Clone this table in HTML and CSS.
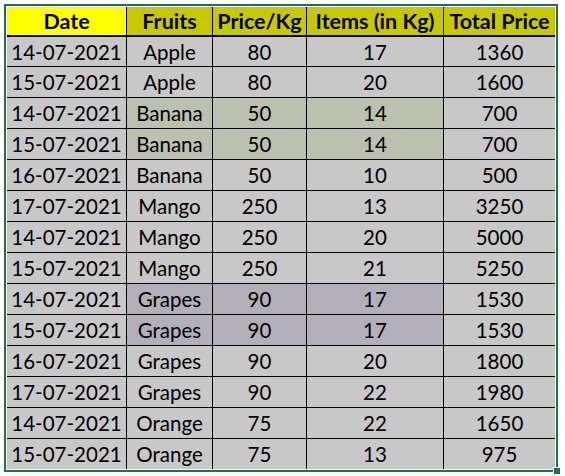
FILE: index.html
```html
<!DOCTYPE html>
<html>
<head>
<meta charset="utf-8">
<link rel="stylesheet" href="styles.css">
</head>
<body>
<div class="sheet">
  <table class="grid">
    <colgroup>
      <col class="c-date"><col class="c-fruit"><col class="c-price"><col class="c-items"><col class="c-total">
    </colgroup>
    <thead>
      <tr>
        <th class="hd-date">Date</th>
        <th>Fruits</th>
        <th>Price/Kg</th>
        <th>Items (in Kg)</th>
        <th>Total Price</th>
      </tr>
    </thead>
    <tbody>
      <tr><td>14-07-2021</td><td>Apple</td><td>80</td><td>17</td><td>1360</td></tr>
      <tr><td>15-07-2021</td><td>Apple</td><td>80</td><td>20</td><td>1600</td></tr>
      <tr><td>14-07-2021</td><td class="hl-green">Banana</td><td class="hl-green">50</td><td class="hl-green">14</td><td>700</td></tr>
      <tr><td>15-07-2021</td><td class="hl-green">Banana</td><td class="hl-green">50</td><td class="hl-green">14</td><td>700</td></tr>
      <tr><td>16-07-2021</td><td>Banana</td><td>50</td><td>10</td><td>500</td></tr>
      <tr><td>17-07-2021</td><td>Mango</td><td>250</td><td>13</td><td>3250</td></tr>
      <tr><td>14-07-2021</td><td>Mango</td><td>250</td><td>20</td><td>5000</td></tr>
      <tr><td>15-07-2021</td><td>Mango</td><td>250</td><td>21</td><td>5250</td></tr>
      <tr><td>14-07-2021</td><td class="hl-purple">Grapes</td><td class="hl-purple">90</td><td class="hl-purple">17</td><td>1530</td></tr>
      <tr><td>15-07-2021</td><td class="hl-purple">Grapes</td><td class="hl-purple">90</td><td class="hl-purple">17</td><td>1530</td></tr>
      <tr><td>16-07-2021</td><td>Grapes</td><td>90</td><td>20</td><td>1800</td></tr>
      <tr><td>17-07-2021</td><td>Grapes</td><td>90</td><td>22</td><td>1980</td></tr>
      <tr><td>14-07-2021</td><td>Orange</td><td>75</td><td>22</td><td>1650</td></tr>
      <tr><td>15-07-2021</td><td>Orange</td><td>75</td><td>13</td><td>975</td></tr>
    </tbody>
  </table>
  <span class="fill-handle"></span>
</div>
</body>
</html>
```

FILE: styles.css
```css
html, body {
  margin: 0;
  padding: 0;
  background: #ffffff;
}

body {
  padding: 4px;
  font-family: Lato, "Open Sans", "Liberation Sans", sans-serif;
}

.sheet {
  position: relative;
  display: inline-block;
  border: 2px solid #217346;
  padding: 1px;
  background: #ffffff;
}

.grid {
  border-collapse: separate;
  border-spacing: 0;
  table-layout: fixed;
  width: 548px;
  background: #c8c8c8;
}

.c-date { width: 120px; }
.c-fruit { width: 86px; }
.c-price { width: 94px; }
.c-items { width: 137px; }
.c-total { width: 111px; }

.grid th,
.grid td {
  box-sizing: border-box;
  padding: 0;
  text-align: center;
  vertical-align: middle;
  color: #000000;
  border-right: 1px solid #000000;
  border-bottom: 1px solid #000000;
  white-space: nowrap;
}

.grid th:last-child,
.grid td:last-child {
  border-right: none;
}

.grid th {
  height: 30px;
  font-size: 21.5px;
  font-weight: 700;
  background: #c8c800;
  border-bottom: 2px solid #000000;
}

.grid th.hd-date {
  background: #ffff00;
}

.grid td {
  height: 31px;
  font-size: 20.5px;
  font-weight: 400;
}

.grid tbody tr:first-child td {
  height: 30px;
}

.grid tbody tr:last-child td {
  border-bottom: none;
  height: 30px;
}

.grid td.hl-green {
  background: #bcc0ae;
}

.grid td.hl-purple {
  background: #b2afba;
}

.fill-handle {
  position: absolute;
  right: -5px;
  bottom: -5px;
  width: 6px;
  height: 6px;
  background: #217346;
  border: 1px solid #ffffff;
}
```
